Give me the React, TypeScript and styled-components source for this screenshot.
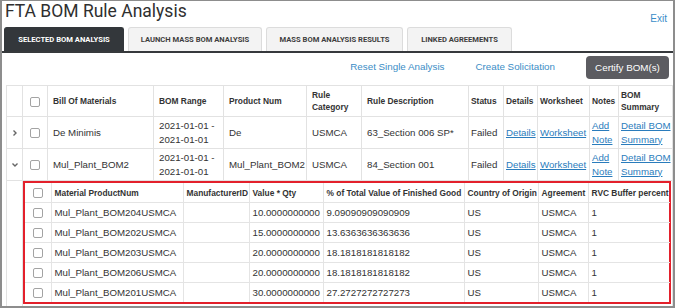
import React from 'react';
import styled, { createGlobalStyle } from 'styled-components';

// BOM rows of the main grid and the materials of the opened BOM
const boms = [
  { id: 1, name: 'De Minimis', product: 'De', category: 'USMCA', rule: '63_Section 006 SP*', status: 'Failed', open: false },
  { id: 2, name: 'Mul_Plant_BOM2', product: 'Mul_Plant_BOM2', category: 'USMCA', rule: '84_Section 001', status: 'Failed', open: true }
];

const materials = [
  { num: 'Mul_Plant_BOM204USMCA', value: '10.0000000000', pct: '9.09090909090909' },
  { num: 'Mul_Plant_BOM202USMCA', value: '15.0000000000', pct: '13.6363636363636' },
  { num: 'Mul_Plant_BOM203USMCA', value: '20.0000000000', pct: '18.1818181818182' },
  { num: 'Mul_Plant_BOM206USMCA', value: '20.0000000000', pct: '18.1818181818182' },
  { num: 'Mul_Plant_BOM201USMCA', value: '30.0000000000', pct: '27.2727272727273' }
];

const tabs = [
  { label: 'Selected BOM Analysis', width: 120, active: true },
  { label: 'Launch Mass BOM Analysis', width: 134 },
  { label: 'Mass BOM Analysis Results', width: 137 },
  { label: 'Linked Agreements', width: 105 }
];

const mainCols = [16, 25, 106, 70, 83, 55, 107, 35, 34, 52, 29, 54];
const subCols = [26, 132, 66, 74, 141, 74, 50, 82];

const GlobalStyle = createGlobalStyle`
  body {
    margin: 0;
    background: #fff;
  }
`;

const Frame = styled.div`
  width: 675px;
  height: 308px;
  box-sizing: border-box;
  border: 2px solid #8d8d8d;
  border-top-width: 1px;
  overflow: hidden;
  background: #fff;
  color: #333;
  font-family: 'Liberation Sans', Arial, sans-serif;
`;

const TitleBar = styled.div`
  display: flex;
  justify-content: space-between;
  height: 26px;
  padding: 0 6px 0 3px;
`;

const Title = styled.h1`
  margin: 0;
  font: 400 17.5px/20px Roboto, sans-serif;
  color: #2f2f2f;
`;

const ExitLink = styled.a`
  align-self: flex-end;
  margin-bottom: 2px;
  font-size: 10px;
  line-height: 12px;
  color: #3a8dc8;
  text-decoration: none;
`;

const TabBar = styled.div`
  display: flex;
  gap: 4px;
  height: 24px;
  padding-left: 2px;
  border-bottom: 2px solid #36393c;
`;

const Tab = styled.div<{ $active?: boolean; $w: number }>`
  width: ${p => p.$w}px;
  height: 24px;
  box-sizing: border-box;
  display: flex;
  align-items: center;
  justify-content: center;
  border: 1px solid ${p => (p.$active ? '#33373b' : '#dcdcdc')};
  border-bottom: none;
  border-radius: 3px 3px 0 0;
  background: ${p => (p.$active ? '#33373b' : '#f3f3f3')};
  color: ${p => (p.$active ? '#fff' : '#3e3e3e')};
  font: 700 7.6px Roboto, sans-serif;
  text-transform: uppercase;
  white-space: nowrap;
`;

const ActionBar = styled.div`
  display: flex;
  justify-content: flex-end;
  align-items: center;
  gap: 31px;
  height: 23px;
  padding: 3px 4px 6px 0;
`;

const ActionLink = styled.a`
  font-size: 9.8px;
  color: #3b8dc6;
  text-decoration: none;
  margin-top: -2px;
`;

const CertifyButton = styled.button`
  width: 83px;
  height: 23px;
  border: none;
  border-radius: 4px;
  background: #5c5c61;
  color: #fff;
  font-family: 'Liberation Sans', Arial, sans-serif;
  font-size: 9.8px;
  padding: 0;
`;

const Grid = styled.table`
  margin-left: 4px;
  width: 666px;
  border-collapse: collapse;
  table-layout: fixed;
`;

const HeadCell = styled.th<{ $tight?: boolean; $center?: boolean }>`
  height: 30px;
  padding: 0 ${p => (p.$tight ? 2 : 5)}px;
  border: 1px solid #e2e2e2;
  font-size: 8.4px;
  font-weight: 700;
  line-height: 12px;
  text-align: ${p => (p.$center ? 'center' : 'left')};
  white-space: nowrap;
  vertical-align: middle;
`;

const Cell = styled.td<{ $tight?: boolean; $center?: boolean }>`
  height: 31px;
  padding: 0 ${p => (p.$tight ? 2 : 5)}px;
  border: 1px solid #e2e2e2;
  font-size: 9.7px;
  line-height: 13.5px;
  white-space: nowrap;
  text-align: ${p => (p.$center ? 'center' : 'left')};
  vertical-align: middle;
`;

const NestCell = styled.td`
  padding: 0 1px 2px 0;
  border: 1px solid #e2e2e2;
`;

const TableLink = styled.a`
  color: #2a7cbc;
  text-decoration: underline;
`;

const Checkbox = styled.span`
  display: inline-block;
  width: 10px;
  height: 10px;
  box-sizing: border-box;
  border: 1px solid #a3a3a3;
  border-radius: 2px;
  background: #fff;
  vertical-align: middle;
`;

const RedBox = styled.div`
  border: 2px solid #e3202b;
`;

const SubTable = styled.table`
  width: 100%;
  border-collapse: collapse;
  border-style: hidden;
  table-layout: fixed;
`;

const SubHead = styled.th<{ $center?: boolean }>`
  height: 19px;
  padding: 0 3px;
  border: 1px solid #e4e4e4;
  font-size: 8.4px;
  font-weight: 700;
  text-align: ${p => (p.$center ? 'center' : 'left')};
  white-space: nowrap;
  overflow: hidden;
`;

const SubCell = styled.td<{ $center?: boolean }>`
  height: 19px;
  padding: 0 3px;
  border: 1px solid #e4e4e4;
  font-size: 9.7px;
  text-align: ${p => (p.$center ? 'center' : 'left')};
  white-space: nowrap;
  overflow: hidden;
`;

const Chevron = ({ open }: { open: boolean }) => (
  <svg width="8" height="8" viewBox="0 0 8 8" style={{ verticalAlign: 'middle' }}>
    {open ? (
      <polyline points="1.5,2.5 4,5 6.5,2.5" fill="none" stroke="#666" strokeWidth="1.4" />
    ) : (
      <polyline points="2.5,1.5 5,4 2.5,6.5" fill="none" stroke="#666" strokeWidth="1.4" />
    )}
  </svg>
);

const MaterialsTable = () => (
  <RedBox>
    <SubTable>
      <colgroup>
        {subCols.map((w, i) => <col key={i} style={{ width: w }} />)}
      </colgroup>
      <thead>
        <tr>
          <SubHead $center><Checkbox /></SubHead>
          <SubHead>Material ProductNum</SubHead>
          <SubHead>ManufacturerID</SubHead>
          <SubHead>Value * Qty</SubHead>
          <SubHead>% of Total Value of Finished Good</SubHead>
          <SubHead>Country of Origin</SubHead>
          <SubHead>Agreement</SubHead>
          <SubHead>RVC Buffer percent</SubHead>
        </tr>
      </thead>
      <tbody>
        {materials.map(m => (
          <tr key={m.num}>
            <SubCell $center><Checkbox /></SubCell>
            <SubCell>{m.num}</SubCell>
            <SubCell></SubCell>
            <SubCell>{m.value}</SubCell>
            <SubCell>{m.pct}</SubCell>
            <SubCell>US</SubCell>
            <SubCell>USMCA</SubCell>
            <SubCell>1</SubCell>
          </tr>
        ))}
      </tbody>
    </SubTable>
  </RedBox>
);

const App: React.FC = () => (
  <>
    <GlobalStyle />
    <Frame>
      <TitleBar>
        <Title>FTA BOM Rule Analysis</Title>
        <ExitLink href="#">Exit</ExitLink>
      </TitleBar>
      <TabBar>
        {tabs.map(t => (
          <Tab key={t.label} $w={t.width} $active={t.active}>{t.label}</Tab>
        ))}
      </TabBar>
      <ActionBar>
        <ActionLink href="#">Reset Single Analysis</ActionLink>
        <ActionLink href="#">Create Solicitation</ActionLink>
        <CertifyButton>Certify BOM(s)</CertifyButton>
      </ActionBar>
      <Grid>
        <colgroup>
          {mainCols.map((w, i) => <col key={i} style={{ width: w }} />)}
        </colgroup>
        <thead>
          <tr>
            <HeadCell></HeadCell>
            <HeadCell $center><Checkbox /></HeadCell>
            <HeadCell>Bill Of Materials</HeadCell>
            <HeadCell>BOM Range</HeadCell>
            <HeadCell>Product Num</HeadCell>
            <HeadCell>Rule<br />Category</HeadCell>
            <HeadCell>Rule Description</HeadCell>
            <HeadCell $tight>Status</HeadCell>
            <HeadCell $tight>Details</HeadCell>
            <HeadCell $tight>Worksheet</HeadCell>
            <HeadCell $tight>Notes</HeadCell>
            <HeadCell $tight>BOM<br />Summary</HeadCell>
          </tr>
        </thead>
        <tbody>
          {boms.map(b => (
            <React.Fragment key={b.id}>
              <tr>
                <Cell $center $tight><Chevron open={b.open} /></Cell>
                <Cell $center><Checkbox /></Cell>
                <Cell>{b.name}</Cell>
                <Cell>2021-01-01 -<br />2021-01-01</Cell>
                <Cell>{b.product}</Cell>
                <Cell>{b.category}</Cell>
                <Cell>{b.rule}</Cell>
                <Cell $tight>{b.status}</Cell>
                <Cell $tight><TableLink href="#">Details</TableLink></Cell>
                <Cell $tight><TableLink href="#">Worksheet</TableLink></Cell>
                <Cell $tight><TableLink href="#">Add<br />Note</TableLink></Cell>
                <Cell $tight><TableLink href="#">Detail BOM<br />Summary</TableLink></Cell>
              </tr>
              {b.open && (
                <tr>
                  <Cell $tight></Cell>
                  <NestCell colSpan={11}>
                    <MaterialsTable />
                  </NestCell>
                </tr>
              )}
            </React.Fragment>
          ))}
        </tbody>
      </Grid>
    </Frame>
  </>
);

export default App;
